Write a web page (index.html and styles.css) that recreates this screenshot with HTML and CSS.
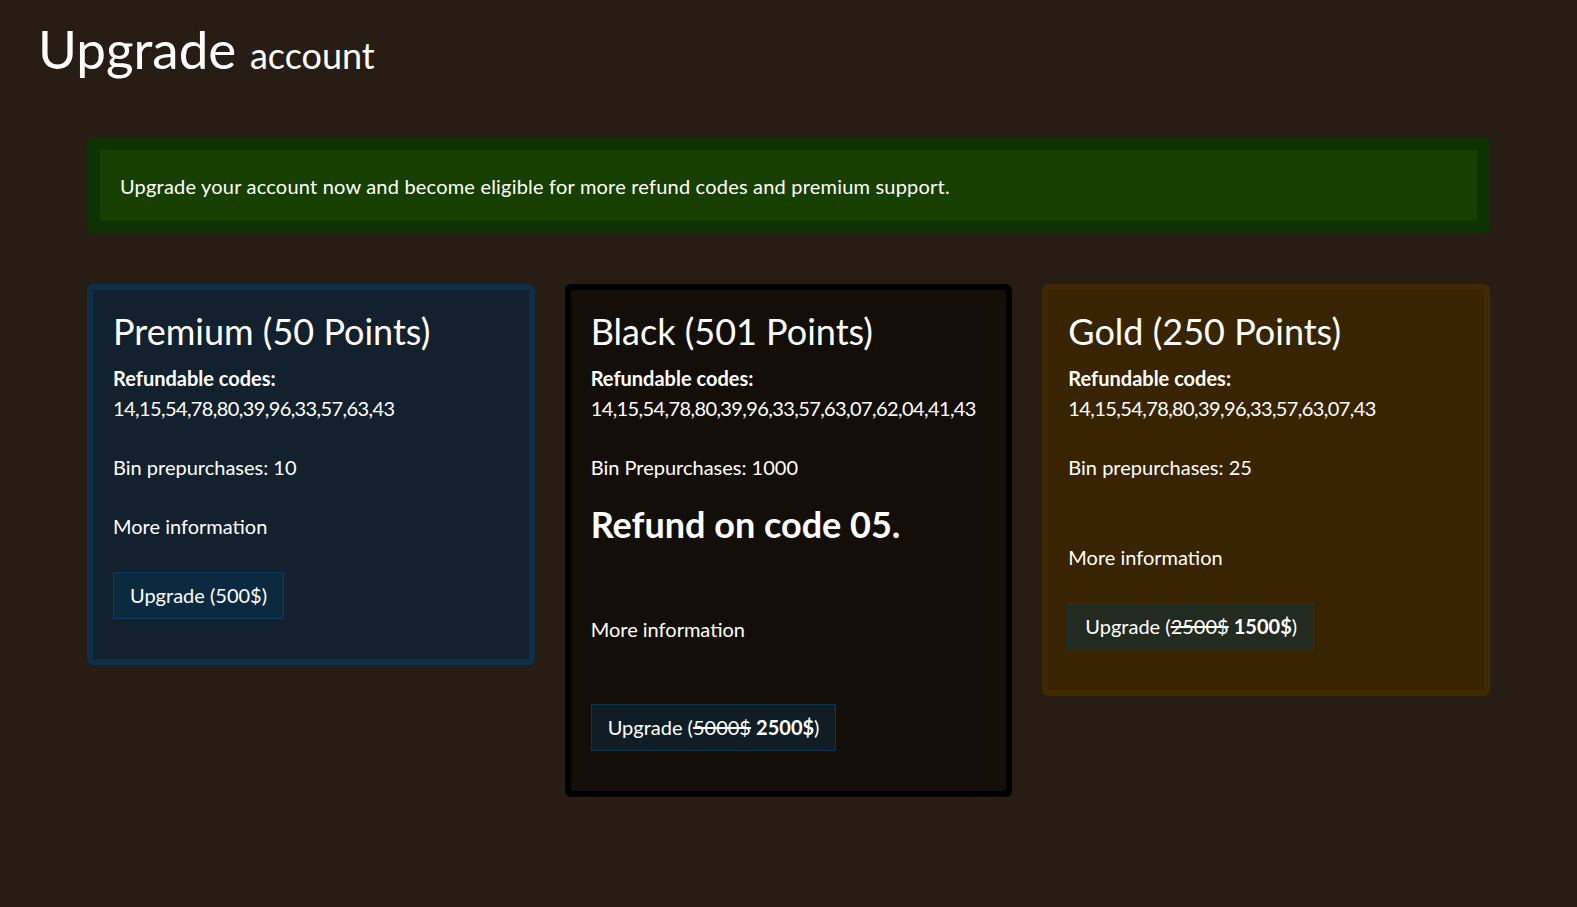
FILE: index.html
```html
<!DOCTYPE html>
<html lang="en">
<head>
    <meta charset="UTF-8">
    <meta name="viewport" content="width=device-width, initial-scale=1.0">
    <title>Upgrade account</title>
    <link rel="stylesheet" href="styles.css">
</head>
<body>
    <header class="page-head">
        <h1>Upgrade <small>account</small></h1>
    </header>
    <main class="content">
        <div class="notice">
            Upgrade your account now and become eligible for more refund codes and premium support.
        </div>

        <section class="plans">
            <div class="plan plan-premium">
                <h2>Premium (50 Points)</h2>
                <p><b>Refundable codes:</b><br><span class="codes">14,15,54,78,80,39,96,33,57,63,43</span></p>
                <p class="gap">Bin prepurchases: 10</p>
                <p class="gap">More information</p>
                <button class="buy">Upgrade (500$)</button>
            </div>

            <div class="plan plan-black">
                <h2>Black (501 Points)</h2>
                <p><b>Refundable codes:</b><br><span class="codes">14,15,54,78,80,39,96,33,57,63,07,62,04,41,43</span></p>
                <p class="gap">Bin Prepurchases: 1000</p>
                <h2 class="refund">Refund on code 05.</h2>
                <p class="gap-lg">More information</p>
                <button class="buy buy-far">Upgrade (<s>5000$</s> <b>2500$</b>)</button>
            </div>

            <div class="plan plan-gold">
                <h2>Gold (250 Points)</h2>
                <p><b>Refundable codes:</b><br><span class="codes">14,15,54,78,80,39,96,33,57,63,07,43</span></p>
                <p class="gap">Bin prepurchases: 25</p>
                <p class="gap-md">More information</p>
                <button class="buy">Upgrade (<s>2500$</s> <b>1500$</b>)</button>
            </div>
        </section>
    </main>
</body>
</html>
```

FILE: styles.css
```css
* {
    padding: 0;
    margin: 0;
    box-sizing: border-box;
}
body {
    background-color: #271d15;
    color: #fff;
    font-family: Lato, "Open Sans", sans-serif;
    font-size: 20px;
    line-height: 30px;
}
.page-head {
    padding: 17px 38px 0;
}
.page-head h1 {
    font-size: 53px;
    font-weight: 400;
    line-height: 64px;
}
.page-head small {
    font-size: 36px;
}
.content {
    padding: 50px 87px 40px;
}
.notice {
    background-color: #173f00;
    border: 13px solid #0f3300;
    border-radius: 8px;
    padding: 21px 20px 20px;
    letter-spacing: 0.2px;
}
.plans {
    display: grid;
    grid-template-columns: minmax(0, 1fr) minmax(0, 1fr) minmax(0, 1fr);
    gap: 30px;
    align-items: start;
    margin-top: 50px;
}
.plan {
    border: 6px solid;
    border-radius: 6px;
    padding: 18px 20px 40px;
}
.plan h2 {
    font-size: 36px;
    font-weight: 400;
    line-height: 46px;
    margin-bottom: 9px;
}
.plan p b {
    font-weight: 700;
}
.codes {
    letter-spacing: -0.6px;
}
.gap {
    margin-top: 29px;
}
.gap-md {
    margin-top: 60px;
}
.gap-lg {
    margin-top: 67px;
}
.plan h2.refund {
    font-weight: 700;
    margin-top: 19px;
    margin-bottom: 0;
}
.buy {
    display: inline-block;
    margin-top: 31px;
    padding: 8px 16px;
    font: inherit;
    color: #fff;
    border: 1px solid;
    line-height: 29px;
}
.buy-far {
    margin-top: 60px;
}
.buy b {
    font-weight: 700;
}

.plan-premium {
    background-color: #13202d;
    border-color: #0e2e4a;
}
.plan-premium .buy {
    background-color: #0c2a3f;
    border-color: #0a3d5e;
}
.plan-black {
    background-color: #140e09;
    border-color: #000;
}
.plan-black .buy {
    background-color: #0f1e24;
    border-color: #0b3550;
}
.plan-gold {
    background-color: #382400;
    border-color: #402900;
}
.plan-gold .buy {
    background-color: #232a1f;
    border-color: #0b3a55;
}
```
